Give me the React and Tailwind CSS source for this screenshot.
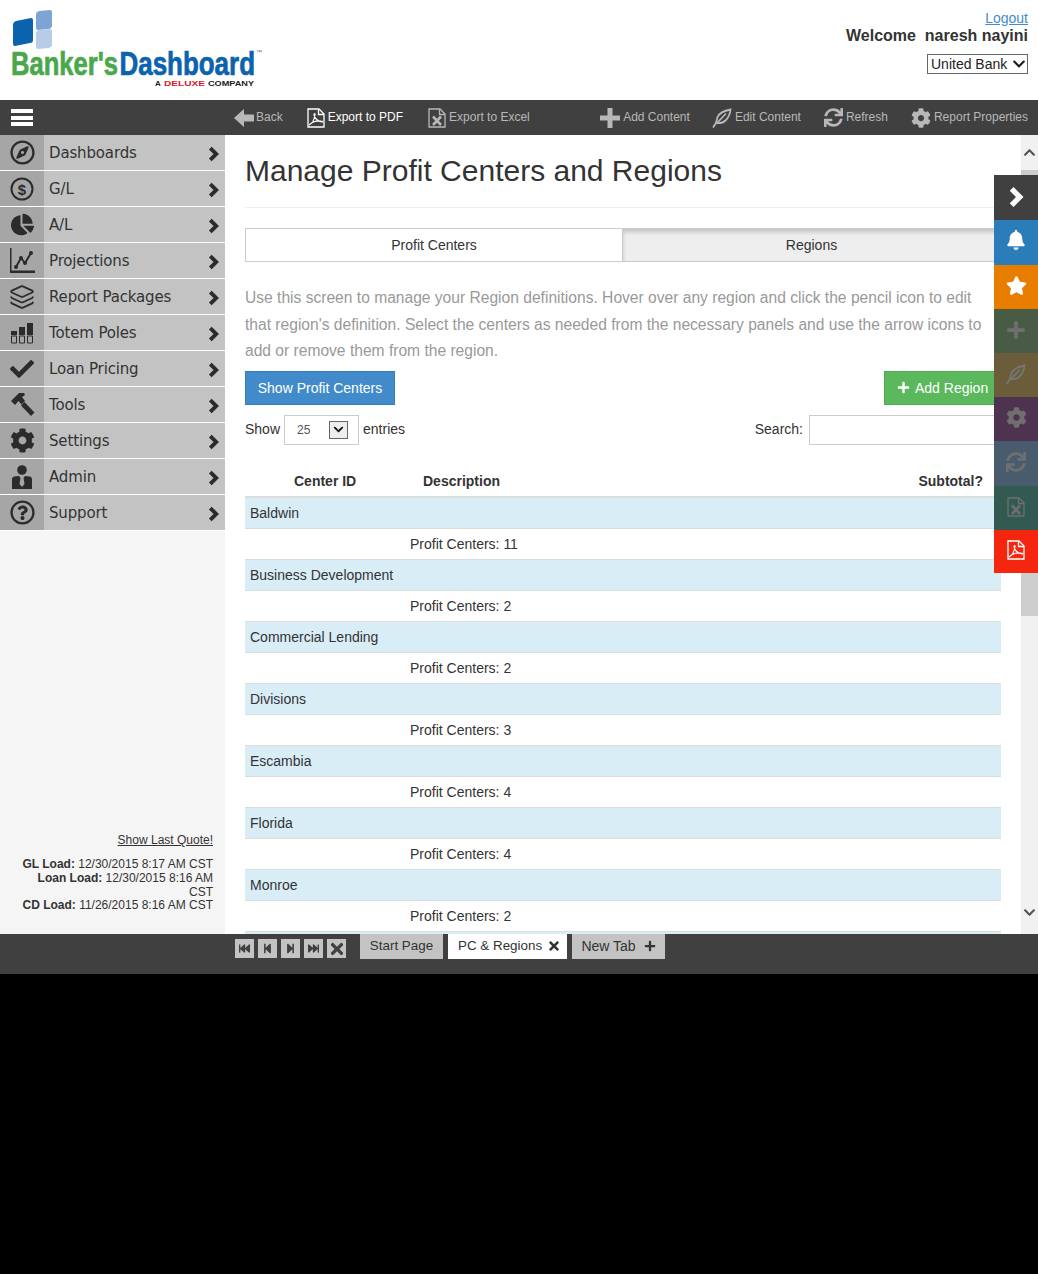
import {
  FaRegCompass,
  FaChartPie,
  FaCheck,
  FaCog,
  FaRegQuestionCircle,
  FaBell,
  FaStar,
  FaPlus,
  FaSync,
  FaTimes,
  FaFastBackward,
  FaStepBackward,
  FaStepForward,
  FaFastForward,
  FaChevronUp,
  FaChevronDown,
} from "react-icons/fa";
import { Layers } from "lucide-react";

const font = "font-['Liberation_Sans',Arial,sans-serif]";

function DollarIcon() {
  return (
    <svg width="24" height="24" viewBox="0 0 24 24">
      <circle cx="12" cy="12" r="10.5" fill="none" stroke="#2b2b2b" strokeWidth="2" />
      <text x="12" y="17.500" textAnchor="middle" fontSize="15" fontWeight="700" fill="#2b2b2b" fontFamily="Liberation Sans">
        $
      </text>
    </svg>
  );
}

function ProjectionsIcon() {
  return (
    <svg width="25" height="25" viewBox="0 0 25 25" fill="#2b2b2b">
      <path d="M0 0h1.500v22.500H25V25H0z" />
      <path d="M6 19 11 10l4 5 6-10" fill="none" stroke="#2b2b2b" strokeWidth="2" />
      <circle cx="6" cy="19" r="2" />
      <circle cx="11" cy="10" r="2" />
      <circle cx="15" cy="15" r="2" />
      <circle cx="21" cy="5" r="2" />
    </svg>
  );
}

function TotemIcon() {
  return (
    <svg width="24" height="24" viewBox="0 0 24 24" fill="#2b2b2b">
      <path d="M1 10h6v4H1zM9 6h6v8H9zM17 2h6v12h-6z" />
      <path d="M1.500 15h5v7h-5zM9.500 15h5v7h-5zM17.500 15h5v7h-5z" fill="none" stroke="#2b2b2b" />
    </svg>
  );
}

function HammerIcon() {
  return (
    <svg width="25" height="25" viewBox="0 0 25 25" fill="#2b2b2b">
      <path d="M1 9 9 1h5l1 2-3 2 3 4-3.500 3.500L8.500 9 5 13z" />
      <path d="M11 13.500 14.500 10 24.500 20.500 21 24z" />
    </svg>
  );
}

function AdminIcon() {
  return (
    <svg width="20" height="24" viewBox="0 0 20 24" fill="#2b2b2b">
      <circle cx="10" cy="5" r="4.800" />
      <path d="M0 24V14q0-2 2-2.500L7 11l1.500 2-1 6 2.500 3 2.500-3-1-6L13 11l5 .5q2 .5 2 2.500v10z" />
    </svg>
  );
}

function Chevron({ w = 11, h = 16, color = "#2b2b2b" }) {
  return (
    <svg width={w} height={h} viewBox="0 0 12 16" fill={color}>
      <path d="M1 3 4 0l8 8-8 8-3-3 5-5z" />
    </svg>
  );
}

function BackArrow() {
  return (
    <svg width="20" height="20" viewBox="0 0 20 20" fill="#b8b8b8">
      <path d="M0 10 10 1v5.500h10v7H10V19z" />
    </svg>
  );
}

function PlusBig() {
  return (
    <svg width="20" height="20" viewBox="0 0 20 20" fill="#b8b8b8">
      <path d="M7.500 0h5v7.500H20v5h-7.500V20h-5v-7.500H0v-5h7.500z" />
    </svg>
  );
}

function PenIcon({ color = "#b8b8b8" }) {
  return (
    <svg width="20" height="20" viewBox="0 0 20 20" fill="none" stroke={color} strokeWidth="1.800">
      <path d="M4 15 5.500 9Q8 3.500 18.500 1.500 18 8 13.500 12.500 10 16 4 15z" />
      <path d="M5 15 14 5.500M1 19.500l3-4.500" />
    </svg>
  );
}

function PdfIcon({ color = "#fff" }) {
  return (
    <svg width="18" height="20" viewBox="0 0 18 20" fill="none" stroke={color} strokeWidth="1.300">
      <path d="M1 1h11l5 5v13H1z" />
      <path d="M11.500 1v5.500H17" />
      <path d="M2 17c3-1 5-5 6-10 .5-2-1-2-1 0 1 4 3 6 8 7 1 0 1-1-1-1-4-.5-9 1-12 4z" strokeWidth="1.100" />
    </svg>
  );
}

function ExcelIcon({ color = "#b8b8b8" }) {
  return (
    <svg width="18" height="20" viewBox="0 0 18 20" fill="none" stroke={color} strokeWidth="1.300">
      <path d="M1 1h11l5 5v13H1z" />
      <path d="M11.500 1v5.500H17" />
      <path d="M5 8.500 13 17M13 8.500 5 17" strokeWidth="2.600" />
    </svg>
  );
}

function Logo() {
  return (
    <svg width="300" height="92" viewBox="0 0 300 92" className="block">
      <path d="M13 25q0-3 3-4l15-3q2 0 2 2v20q0 3-3 3l-15 3q-2 0-2-2z" fill="#0b62ad" />
      <path d="M36 14q0-2 3-3l11-1q2 0 2 2v14q0 2-3 3l-11 1q-2 0-2-2z" fill="#7ea4d4" />
      <path d="M36 33q0-2 3-3l11-1q2 0 2 2v14q0 2-3 3l-11 1q-2 0-2-2z" fill="#b8cce8" />
      <text x="11" y="75" fontFamily="Liberation Sans" fontWeight="700" fontSize="33" fill="#4aa84c" stroke="#4aa84c" strokeWidth="0.700" textLength="107" lengthAdjust="spacingAndGlyphs">
        Banker's
      </text>
      <text x="119.500" y="75" fontFamily="Liberation Sans" fontWeight="700" fontSize="33" fill="#0b62ad" stroke="#0b62ad" strokeWidth="0.700" textLength="135.500" lengthAdjust="spacingAndGlyphs">
        Dashboard
      </text>
      <text x="256" y="54" fontFamily="Liberation Sans" fontSize="6" fill="#666">
        ™
      </text>
      <text x="155" y="86" fontFamily="Liberation Sans" fontWeight="700" fontSize="8" fill="#222">
        A
      </text>
      <text x="164" y="86" fontFamily="Liberation Sans" fontWeight="700" fontSize="8" fill="#d6202a" textLength="41" lengthAdjust="spacingAndGlyphs">
        DELUXE
      </text>
      <text x="208" y="86" fontFamily="Liberation Sans" fontWeight="700" fontSize="8" fill="#222" textLength="46" lengthAdjust="spacingAndGlyphs">
        COMPANY
      </text>
    </svg>
  );
}

const menu = [
  ["Dashboards", <FaRegCompass size={25} />],
  ["G/L", <DollarIcon />],
  ["A/L", <FaChartPie size={23} />],
  ["Projections", <ProjectionsIcon />],
  ["Report Packages", <Layers size={26} strokeWidth={1.6} />],
  ["Totem Poles", <TotemIcon />],
  ["Loan Pricing", <FaCheck size={24} />],
  ["Tools", <HammerIcon />],
  ["Settings", <FaCog size={25} />],
  ["Admin", <AdminIcon />],
  ["Support", <FaRegQuestionCircle size={25} />],
];

const rows = [
  ["Baldwin", 11],
  ["Business Development", 2],
  ["Commercial Lending", 2],
  ["Divisions", 3],
  ["Escambia", 4],
  ["Florida", 4],
  ["Monroe", 2],
];

const dock = [
  ["bg-[#404040]", <Chevron w={16} h={20} color="#fff" />, "h-[45px] pb-px"],
  ["bg-[#2a7db9]", <FaBell size={20} color="#fff" />, "h-[45px] pb-[5px]"],
  ["bg-[#e97d00]", <FaStar size={21} color="#fff" />, "h-[44px] pb-[3px]"],
  ["bg-[#485c45]", <FaPlus size={20} color="#6f6f6f" />, "h-[44px] pb-[3px]"],
  ["bg-[#6b5d3a]", <PenIcon color="#767676" />, "h-[44px] pb-[3px]"],
  ["bg-[#4d3350]", <FaCog size={21} color="#6f6f6f" />, "h-[44px] pb-[3px]"],
  ["bg-[#485c6d]", <FaSync size={20} color="#6f6f6f" />, "h-[45px] pb-[3px]"],
  ["bg-[#335a50]", <ExcelIcon color="#6f6f6f" />, "h-[44px] pb-[3px]"],
  ["bg-[#f5260f]", <PdfIcon />, "h-[43px] pb-[3px]"],
];

function ToolItem({ icon, label, className, active }) {
  return (
    <div className={`flex items-center gap-[3px] text-xs ${active ? "text-white" : "text-[#b8b8b8]"} ${className || ""}`}>
      {icon}
      <span className="mb-[2px]">{label}</span>
    </div>
  );
}

function NavButton({ children }) {
  return (
    <div className="w-[19px] h-[19px] bg-[#c3c3c3] flex items-center justify-center text-[#404040]">
      {children}
    </div>
  );
}

export default function App() {
  return (
    <div className={`min-h-screen bg-black text-[#333] text-sm ${font}`}>
      {/* cabecera */}
      <div className="h-[100px] bg-white flex justify-between">
        <div>
          <Logo />
        </div>
        <div className="pr-[10px] pt-[10px] flex flex-col items-end">
          <a className="text-[#428bca] underline leading-4">Logout</a>
          <div className="font-bold text-base leading-[18px] mt-px">Welcome&nbsp; naresh nayini</div>
          <div className="relative mt-[9px] w-[101px] h-5 border border-[#666] text-sm leading-[18px] pl-[3px] text-[#222]">
            United Bank
            <FaChevronDown size={14} className="absolute right-[1px] top-[2px] text-[#222]" />
          </div>
        </div>
      </div>

      {/* toolbar */}
      <div className="h-[35px] bg-[#404040] flex items-center">
        <div className="w-[234px] pl-[11px] shrink-0">
          <div className="w-[22px] h-[17px] flex flex-col justify-between">
            <div className="h-[4px] bg-white" />
            <div className="h-[4px] bg-white" />
            <div className="h-[4px] bg-white" />
          </div>
        </div>
        <ToolItem icon={<BackArrow />} label="Back" className="-mr-px [&>span]:-ml-px" />
        <ToolItem icon={<PdfIcon />} label="Export to PDF" active className="ml-[25px]" />
        <ToolItem icon={<ExcelIcon />} label="Export to Excel" className="ml-[25px]" />
        <div className="ml-auto pr-[10px] flex items-center">
          <ToolItem icon={<PlusBig />} label="Add Content" />
          <ToolItem icon={<PenIcon />} label="Edit Content" className="ml-[22px]" />
          <ToolItem icon={<FaSync size={19} />} label="Refresh" className="ml-[23px]" />
          <ToolItem icon={<FaCog size={20} />} label="Report Properties" className="ml-[23px]" />
        </div>
      </div>

      {/* cuerpo */}
      <div className="relative h-[799px] flex bg-white overflow-hidden">
        <div className="w-[225px] shrink-0 bg-[#f5f5f5] flex flex-col">
          {menu.map(([name, icon]) => (
            <div key={name} className="h-9 flex border-b border-white last:border-b-0 bg-[#c3c3c3]">
              <div className="w-11 bg-[#a6a6a6] flex items-center justify-center text-[#2b2b2b]">{icon}</div>
              <div className="flex-1 pl-[5px] pr-[6px] flex items-center justify-between font-['DejaVu_Sans',sans-serif] text-[15px] tracking-[-0.15px] text-[#333]">
                <span className="pt-0.5">{name}</span>
                <span className="pt-[3px]">
                  <Chevron />
                </span>
              </div>
            </div>
          ))}
          <div className="mt-auto pr-3 pl-4 pb-[21px] text-right text-xs text-[#333]">
            <a className="underline">Show Last Quote!</a>
            <div className="mt-[10px] leading-[13.7px]">
              <div>
                <b>GL Load:</b> 12/30/2015 8:17 AM CST
              </div>
              <div>
                <b>Loan Load:</b> 12/30/2015 8:16 AM CST
              </div>
              <div>
                <b>CD Load:</b> 11/26/2015 8:16 AM CST
              </div>
            </div>
          </div>
        </div>

        <div className="flex-1 min-w-0 pl-5 pr-5 overflow-hidden">
          <h1 className="text-[30px] leading-[33px] pt-[19px] pb-[20px] border-b border-[#eee] text-[#333]">
            Manage Profit Centers and Regions
          </h1>

          <div className="mt-5 flex h-[34px] text-center leading-[32px]">
            <div className="w-[377px] border border-[#ccc] border-r-0 bg-white">Profit Centers</div>
            <div className="flex-1 border border-[#ccc] bg-[#eee] shadow-[inset_0_3px_4px_rgba(0,0,0,0.18)]">Regions</div>
          </div>

          <p className="mt-[23px] text-[15.6px] leading-[26.6px] text-[#999]">
            Use this screen to manage your Region definitions. Hover over any region and click the pencil icon to edit
            that region's definition. Select the centers as needed from the necessary panels and use the arrow icons to
            add or remove them from the region.
          </p>

          <div className="mt-[6px] flex justify-between">
            <button className="h-[34px] w-[150px] bg-[#428bca] border border-[#357ebd] text-white">Show Profit Centers</button>
            <button className="h-[34px] w-[117px] pl-3 bg-[#5cb85c] border border-[#4cae4c] text-white flex items-center gap-[5px]">
              <FaPlus size={13} />
              Add Region
            </button>
          </div>

          <div className="mt-[10px] flex items-center justify-between h-[30px]">
            <div className="flex items-center">
              <span className="mb-0.5">Show</span>
              <div className="relative ml-1 mr-1 w-[75px] h-[30px] border border-[#ccc] text-xs leading-[28px] pl-3 text-[#555]">
                25
                <div className="absolute left-[44px] top-[5px] w-[19px] h-[18px] border border-[#666] bg-[#eee] flex items-center justify-center text-[#111]">
                  <FaChevronDown size={11} />
                </div>
              </div>
              <span className="mb-0.5">entries</span>
            </div>
            <div className="flex items-center gap-1.5">
              <span className="mb-0.5">Search:</span>
              <input className="w-[192px] h-[30px] border border-[#ccc] bg-white" />
            </div>
          </div>

          <div className="mt-5 h-[33px] pb-[5px] flex items-end font-bold border-b-2 border-[#ddd] relative">
            <span className="ml-[49px] w-[129px]">Center ID</span>
            <span>Description</span>
            <span className="ml-auto mr-[18px]">Subtotal?</span>
          </div>
          {rows.map(([name, count]) => (
            <div key={name}>
              <div className="h-[31px] bg-[#d9edf7] border-b border-[#ddd] pl-[5px] leading-[30px]">{name}</div>
              <div className="h-[31px] border-b border-[#ddd] pl-[165px] leading-[30px]">Profit Centers: {count}</div>
            </div>
          ))}
          <div className="h-[31px] bg-[#d9edf7]" />
        </div>

        {/* scrollbar */}
        <div className="w-[17px] shrink-0 bg-[#f1f1f1] flex flex-col items-center justify-between">
          <div className="w-full">
            <div className="h-[35px] flex items-center justify-center text-[#505050]">
              <FaChevronUp size={13} />
            </div>
            <div className="h-[446px] bg-[#cdcdcd]" />
          </div>
          <div className="h-[44px] flex items-center justify-center text-[#505050]">
            <FaChevronDown size={13} />
          </div>
        </div>

        {/* dock flotante */}
        <div className="absolute right-0 top-[40px] w-11 flex flex-col">
          {dock.map(([bg, icon, h], i) => (
            <div key={i} className={`${bg} ${h} flex items-center justify-center`}>
              {icon}
            </div>
          ))}
        </div>
      </div>

      {/* pestañas */}
      <div className="h-10 bg-[#404040] flex items-start pl-[235px]">
        <div className="flex gap-1 pt-[5px]">
          <NavButton><FaFastBackward size={11} /></NavButton>
          <NavButton><FaStepBackward size={11} /></NavButton>
          <NavButton><FaStepForward size={11} /></NavButton>
          <NavButton><FaFastForward size={11} /></NavButton>
          <NavButton><FaTimes size={18} /></NavButton>
        </div>
        <div className="ml-[14px] h-[25px] w-[83px] bg-[#c3c3c3] text-center text-[13.4px] leading-[24px]">Start Page</div>
        <div className="ml-[5px] h-[25px] w-[119px] bg-white flex items-center gap-[5px] pl-[10px] text-[13.4px] pb-px">
          PC &amp; Regions <FaTimes size={14} />
        </div>
        <div className="ml-[5px] h-[25px] w-[93px] bg-[#c3c3c3] flex items-center justify-center gap-[8px] pb-px">
          New Tab <FaPlus size={12} />
        </div>
      </div>
    </div>
  );
}
